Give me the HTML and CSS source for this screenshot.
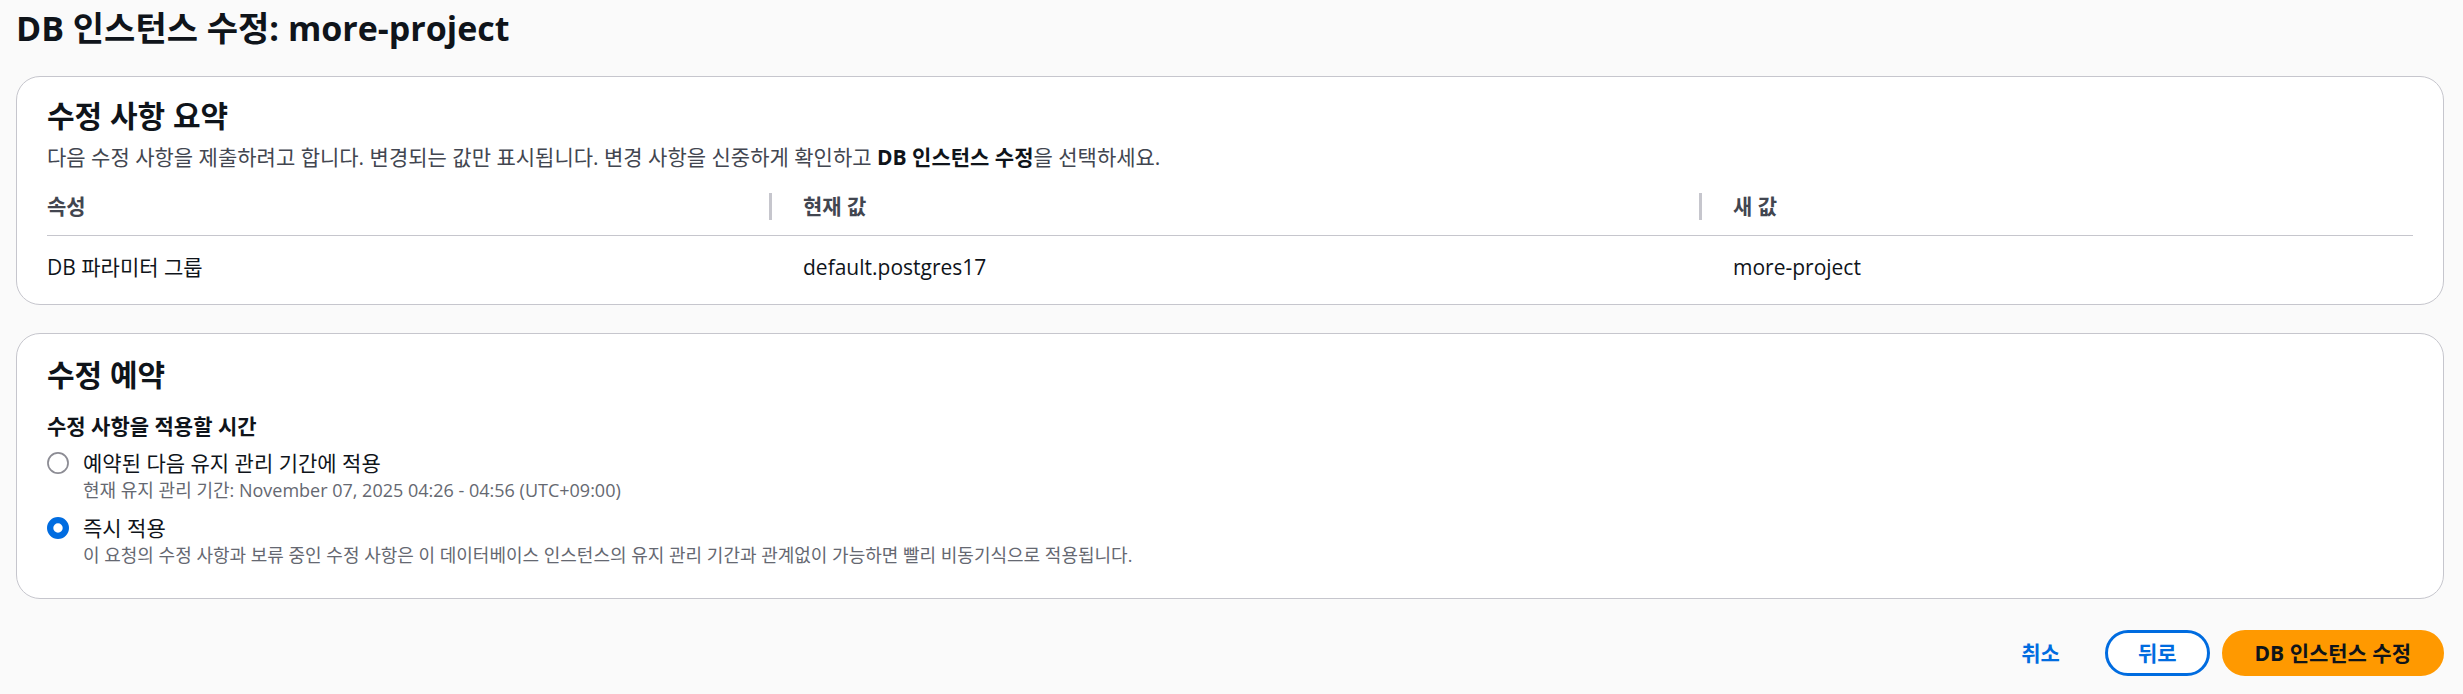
FILE: index.html
```html
<!DOCTYPE html>
<html lang="ko">
<head>
<meta charset="utf-8">
<title>DB 인스턴스 수정: more-project</title>
<link rel="stylesheet" href="styles.css">
</head>
<body>
<div class="page">
  <h1 class="page-title">DB 인스턴스 수정: more-project</h1>

  <section class="card card-summary">
    <h2 class="card-heading">수정 사항 요약</h2>
    <p class="card-desc">다음 수정 사항을 제출하려고 합니다. 변경되는 값만 표시됩니다. 변경 사항을 신중하게 확인하고 <strong>DB 인스턴스 수정</strong>을 선택하세요.</p>
    <div class="table">
      <div class="th"><span class="th-inner">속성</span></div>
      <div class="th th-sep"><span class="th-inner">현재 값</span></div>
      <div class="th th-sep"><span class="th-inner">새 값</span></div>
      <div class="td">DB 파라미터 그룹</div>
      <div class="td td-pad">default.postgres17</div>
      <div class="td td-pad">more-project</div>
    </div>
  </section>

  <section class="card card-schedule">
    <h2 class="card-heading">수정 예약</h2>
    <div class="field-label">수정 사항을 적용할 시간</div>
    <div class="radio-group">
      <div class="radio">
        <div class="radio-row">
          <svg class="radio-icon" viewBox="0 0 14 14" aria-hidden="true"><circle cx="7" cy="7" r="6.4" fill="#ffffff" stroke="#8c8c94" stroke-width="1.1"/></svg>
          <span class="radio-label">예약된 다음 유지 관리 기간에 적용</span>
        </div>
        <div class="radio-desc">현재 유지 관리 기간: November 07, 2025 04:26 - 04:56 (UTC+09:00)</div>
      </div>
      <div class="radio">
        <div class="radio-row">
          <svg class="radio-icon" viewBox="0 0 14 14" aria-hidden="true"><circle cx="7" cy="7" r="5" fill="#ffffff" stroke="#006ce0" stroke-width="4"/></svg>
          <span class="radio-label">즉시 적용</span>
        </div>
        <div class="radio-desc">이 요청의 수정 사항과 보류 중인 수정 사항은 이 데이터베이스 인스턴스의 유지 관리 기간과 관계없이 가능하면 빨리 비동기식으로 적용됩니다.</div>
      </div>
    </div>
  </section>

  <div class="actions">
    <button class="btn btn-link" type="button">취소</button>
    <button class="btn btn-normal" type="button">뒤로</button>
    <button class="btn btn-primary" type="button">DB 인스턴스 수정</button>
  </div>
</div>
</body>
</html>
```

FILE: styles.css
```css
* { box-sizing: border-box; }

html, body {
  margin: 0;
  padding: 0;
  background: #fafafa;
}

body {
  font-family: "Open Sans", "Noto Sans CJK KR", sans-serif;
  color: #0f141a;
  font-size: 21px;
  line-height: 30px;
}

.page {
  padding: 6px 19px 0 16px;
}

.page-title {
  margin: 0;
  font-size: 34px;
  line-height: 45px;
  font-weight: 700;
  color: #0f141a;
}

.card {
  background: #ffffff;
  border: 1px solid #c6c6cd;
  border-radius: 24px;
  padding: 0 30px;
}

.card-summary {
  margin-top: 25px;
  padding-top: 21px;
  padding-bottom: 22px;
}

.card-schedule {
  margin-top: 28px;
  padding-top: 23px;
  padding-bottom: 31px;
}

.card-heading {
  margin: 0;
  font-size: 30px;
  line-height: 36px;
  font-weight: 700;
  color: #0f141a;
}

.card-desc {
  margin: 8px 0 0;
  font-size: 21px;
  line-height: 30px;
  color: #424650;
}

.card-desc strong {
  font-weight: 700;
  color: #0f141a;
}

.table {
  display: grid;
  grid-template-columns: 722px 930px 1fr;
}

.th {
  padding: 21px 0 15px;
  border-bottom: 1px solid #c6c6cd;
  font-weight: 700;
  color: #424650;
}

.th-inner {
  display: block;
  line-height: 27px;
}

.th-sep .th-inner {
  border-left: 3px solid #c6c6cd;
  padding-left: 31px;
}

.td {
  padding: 16px 0 0;
  line-height: 30px;
  color: #0f141a;
}

.td-pad {
  padding-left: 34px;
}

.field-label {
  margin-top: 18px;
  font-weight: 700;
  line-height: 30px;
}

.radio-group {
  display: flex;
  flex-direction: column;
  gap: 11px;
  margin-top: 7px;
}

.radio-row {
  display: flex;
  align-items: center;
  gap: 14px;
}

.radio-icon {
  width: 22px;
  height: 22px;
  flex: none;
}

.radio-label {
  line-height: 30px;
}

.radio-desc {
  padding-left: 36px;
  font-size: 18px;
  line-height: 24px;
  color: #656871;
}

.actions {
  display: flex;
  justify-content: flex-end;
  gap: 12px;
  margin-top: 31px;
}

.btn {
  font-family: inherit;
  font-size: 21px;
  line-height: 30px;
  font-weight: 700;
  height: 46px;
  padding: 5px 30px;
  border: 3px solid transparent;
  border-radius: 23px;
  background: transparent;
  cursor: pointer;
}

.btn-link {
  color: #006ce0;
}

.btn-normal {
  color: #006ce0;
  border-color: #006ce0;
  background: #ffffff;
}

.btn-primary {
  color: #0f141a;
  background: #ff9900;
  border-color: #ff9900;
}
```
